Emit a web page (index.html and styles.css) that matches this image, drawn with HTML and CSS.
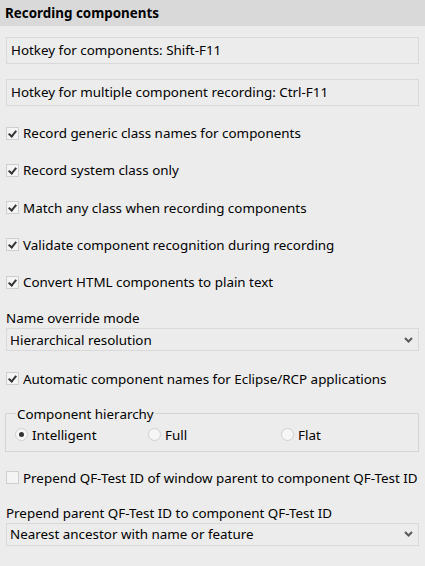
FILE: index.html
```html
<!DOCTYPE html>
<html lang="en">
<head>
    <meta charset="UTF-8" />
    <title>Recording components</title>
    <link rel="stylesheet" href="styles.css">
</head>
<body>
    <div class="panel">
        <div class="title">Recording components</div>
        <div class="content">
            <div class="field">Hotkey for components: Shift-F11</div>
            <div class="field field-last">Hotkey for multiple component recording: Ctrl-F11</div>

            <label class="check"><span class="box checked"></span>Record generic class names for components</label>
            <label class="check"><span class="box checked"></span>Record system class only</label>
            <label class="check"><span class="box checked"></span>Match any class when recording components</label>
            <label class="check"><span class="box checked"></span>Validate component recognition during recording</label>
            <label class="check"><span class="box checked"></span>Convert HTML components to plain text</label>

            <div class="select-block">
                <div class="caption">Name override mode</div>
                <div class="combo">
                    <span>Hierarchical resolution</span>
                    <svg width="9" height="6" viewBox="0 0 9 6"><path d="M1 1 L4.5 4.5 L8 1" fill="none" stroke="#5a5a5a" stroke-width="2"/></svg>
                </div>
            </div>

            <label class="check check-auto"><span class="box checked"></span>Automatic component names for Eclipse/RCP applications</label>

            <fieldset class="group">
                <legend>Component hierarchy</legend>
                <div class="radios">
                    <label class="radio"><span class="dot selected"></span>Intelligent</label>
                    <label class="radio"><span class="dot"></span>Full</label>
                    <label class="radio"><span class="dot"></span>Flat</label>
                </div>
            </fieldset>

            <label class="check check-prepend"><span class="box"></span>Prepend QF-Test ID of window parent to component QF-Test ID</label>

            <div class="select-block select-last">
                <div class="caption">Prepend parent QF-Test ID to component QF-Test ID</div>
                <div class="combo">
                    <span>Nearest ancestor with name or feature</span>
                    <svg width="9" height="6" viewBox="0 0 9 6"><path d="M1 1 L4.5 4.5 L8 1" fill="none" stroke="#5a5a5a" stroke-width="2"/></svg>
                </div>
            </div>
        </div>
    </div>
</body>
</html>
```

FILE: styles.css
```css
body {
    margin: 0;
    background: #ececec;
    font-family: 'Noto Sans', 'Open Sans', sans-serif;
    font-size: 13.4px;
    color: #000;
}
.panel {
    width: 425px;
    height: 566px;
    background: #ececec;
}
.title {
    height: 26px;
    line-height: 26px;
    background: #d9d9d9;
    padding-left: 5px;
    font-weight: bold;
}
.content {
    display: flex;
    flex-direction: column;
    padding: 11px 6px 0 6px;
}
.field {
    height: 25px;
    line-height: 25px;
    border: 1px solid #d9d9d9;
    padding-left: 4px;
    margin-bottom: 15px;
}
.field-last {
    margin-bottom: 16px;
}
.check {
    display: flex;
    align-items: center;
    height: 22px;
    margin-bottom: 15.3px;
}
.box {
    width: 11px;
    height: 11px;
    border: 1px solid #cfcfcf;
    background: #f4f4f4;
    margin-right: 4px;
    position: relative;
}
.box.checked::after {
    content: "";
    position: absolute;
    left: 3px;
    top: 1px;
    width: 3px;
    height: 6px;
    border-right: 2px solid #333;
    border-bottom: 2px solid #333;
    transform: rotate(40deg);
}
.select-block {
    margin-top: 2px;
    margin-bottom: 16.5px;
}
.caption {
    height: 16px;
    line-height: 16px;
    margin-bottom: 2px;
}
.combo {
    height: 21px;
    border: 1px solid #d9d9d9;
    display: flex;
    align-items: center;
    justify-content: space-between;
    padding: 0 5px 0 3px;
}
.check-auto {
    margin-bottom: 16px;
}
.group {
    margin: 0 0 15px -1px;
    padding: 2px 4px 5px 9px;
    border: 1px solid #d4d4d4;
}
.group legend {
    padding: 0 1px;
    margin-left: 1px;
    line-height: 16px;
}
.radios {
    display: flex;
    height: 22px;
    align-items: center;
}
.radio {
    display: flex;
    align-items: center;
    width: 133px;
}
.dot {
    width: 11px;
    height: 11px;
    border: 1px solid #d0d0d0;
    border-radius: 50%;
    background: #f6f6f6;
    margin-right: 4px;
    position: relative;
}
.dot.selected::after {
    content: "";
    position: absolute;
    left: 3px;
    top: 3px;
    width: 5px;
    height: 5px;
    border-radius: 50%;
    background: #333;
}
.check-prepend {
    margin-bottom: 16px;
}
.select-last {
    margin-top: 0;
}
```
